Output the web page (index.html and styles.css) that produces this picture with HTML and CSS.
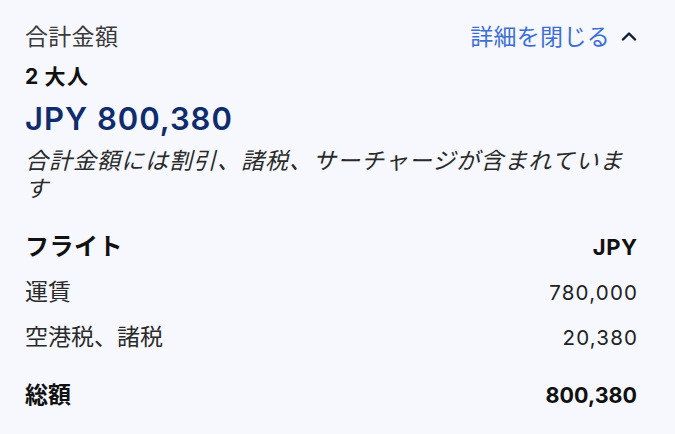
FILE: index.html
```html
<!DOCTYPE html>
<html lang="ja">
<head>
<meta charset="utf-8">
<link rel="stylesheet" href="styles.css">
</head>
<body>
<div class="panel">
  <div class="head">
    <div class="title">合計金額</div>
    <a class="toggle" href="#">詳細を閉じる
      <svg class="chev" width="16" height="10" viewBox="0 0 16 10"><path d="M2 8.5 L8 2.5 L14 8.5" fill="none" stroke="#0d1a3a" stroke-width="2.4" stroke-linecap="round" stroke-linejoin="round"/></svg>
    </a>
  </div>
  <div class="pax"><span class="num">2</span> 大人</div>
  <div class="total">JPY 800,380</div>
  <p class="note">合計金額には割引、諸税、サーチャージが含まれています</p>
  <div class="rows">
    <div class="row sect"><span>フライト</span><span class="amt">JPY</span></div>
    <div class="row item"><span>運賃</span><span class="amt">780,000</span></div>
    <div class="row item"><span>空港税、諸税</span><span class="amt">20,380</span></div>
    <div class="row grand"><span>総額</span><span class="amt">800,380</span></div>
  </div>
</div>
</body>
</html>
```
FILE: styles.css
```css
html, body {
  margin: 0;
  padding: 0;
  background: #f6f8fd;
}
body {
  font-family: "Noto Sans CJK JP", sans-serif;
  color: #1a1a1a;
}
.panel {
  padding: 18px 38px 0 25px;
  display: flex;
  flex-direction: column;
}
.head {
  display: flex;
  justify-content: space-between;
  align-items: center;
  height: 34px;
}
.title {
  font-size: 23px;
  color: #3a3a3a;
  letter-spacing: 0.3px;
}
.toggle {
  font-size: 23px;
  color: #3d6fd6;
  text-decoration: none;
  display: flex;
  align-items: center;
  gap: 11px;
  letter-spacing: 0.3px;
}
.chev { margin-top: 1px; }
.pax {
  margin-top: 8px;
  font-size: 21px;
  font-weight: 700;
  color: #111;
  height: 30px;
  line-height: 30px;
  letter-spacing: 1.5px;
}
.num { font-family: "Inter", "Open Sans", sans-serif; font-size: 21px; letter-spacing: 0; }
.total {
  margin-top: 9px;
  font-family: "Inter", "Open Sans", sans-serif;
  font-size: 31px;
  font-weight: 600;
  color: #0f2c6e;
  line-height: 40px;
  letter-spacing: 1px;
}
.note {
  margin: 6px 0 0;
  font-size: 23px;
  font-style: italic;
  line-height: 28px;
  color: #2a2a2a;
  letter-spacing: 1px;
}
.rows {
  margin-top: 27px;
  display: flex;
  flex-direction: column;
}
.row {
  display: flex;
  justify-content: space-between;
  align-items: baseline;
}
.amt {
  font-family: "Inter", "Open Sans", sans-serif;
  letter-spacing: 1.2px;
  margin-right: -1.2px;
}
.sect {
  font-size: 24px;
  font-weight: 700;
  height: 34px;
  line-height: 34px;
  color: #111;
  letter-spacing: 0.5px;
}
.sect .amt { font-size: 22px; font-weight: 700; letter-spacing: 0.5px; margin-right: -0.5px; }
.item {
  font-size: 23px;
  color: #2a2a2a;
  height: 45px;
  line-height: 45px;
}
.sect + .item { margin-top: 6px; }
.item .amt { font-size: 20.5px; color: #222; }
.grand {
  margin-top: 15px;
  height: 40px;
  line-height: 40px;
  font-size: 23px;
  font-weight: 700;
  color: #111;
}
.grand .amt { font-size: 21.5px; font-weight: 700; letter-spacing: 0; margin-right: 0; }
```
